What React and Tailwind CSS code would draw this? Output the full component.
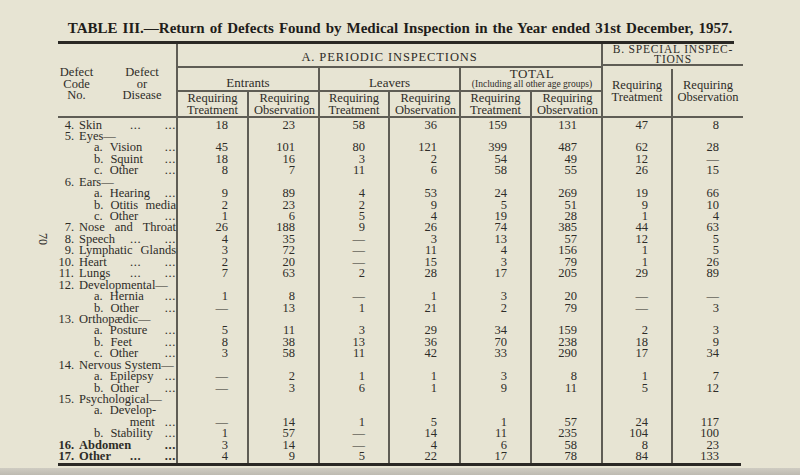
import React from 'react'

const rows = [
  { n: '4.', t: 'Skin', dots: 2, v: [18, 23, 58, 36, 159, 131, 47, 8] },
  { n: '5.', t: 'Eyes—' },
  { s: 'a.', t: 'Vision', dots: 1, v: [45, 101, 80, 121, 399, 487, 62, 28] },
  { s: 'b.', t: 'Squint', dots: 1, v: [18, 16, 3, 2, 54, 49, 12, '—'] },
  { s: 'c.', t: 'Other', dots: 1, v: [8, 7, 11, 6, 58, 55, 26, 15] },
  { n: '6.', t: 'Ears—' },
  { s: 'a.', t: 'Hearing', dots: 1, v: [9, 89, 4, 53, 24, 269, 19, 66] },
  { s: 'b.', t: 'Otitis media', just: true, v: [2, 23, 2, 9, 5, 51, 9, 10] },
  { s: 'c.', t: 'Other', dots: 1, v: [1, 6, 5, 4, 19, 28, 1, 4] },
  { n: '7.', t: 'Nose and Throat', just: true, v: [26, 188, 9, 26, 74, 385, 44, 63] },
  { n: '8.', t: 'Speech', dots: 2, v: [4, 35, '—', 3, 13, 57, 12, 5] },
  { n: '9.', t: 'Lymphatic Glands', just: true, v: [3, 72, '—', 11, 4, 156, 1, 5] },
  { n: '10.', t: 'Heart', dots: 2, v: [2, 20, '—', 15, 3, 79, 1, 26] },
  { n: '11.', t: 'Lungs', dots: 2, v: [7, 63, 2, 28, 17, 205, 29, 89] },
  { n: '12.', t: 'Developmental—' },
  { s: 'a.', t: 'Hernia', dots: 1, v: [1, 8, '—', 1, 3, 20, '—', '—'] },
  { s: 'b.', t: 'Other', dots: 1, v: ['—', 13, 1, 21, 2, 79, '—', 3] },
  { n: '13.', t: 'Orthopædic—' },
  { s: 'a.', t: 'Posture', dots: 1, v: [5, 11, 3, 29, 34, 159, 2, 3] },
  { s: 'b.', t: 'Feet', dots: 1, v: [8, 38, 13, 36, 70, 238, 18, 9] },
  { s: 'c.', t: 'Other', dots: 1, v: [3, 58, 11, 42, 33, 290, 17, 34] },
  { n: '14.', t: 'Nervous System—' },
  { s: 'a.', t: 'Epilepsy', dots: 1, v: ['—', 2, 1, 1, 3, 8, 1, 7] },
  { s: 'b.', t: 'Other', dots: 1, v: ['—', 3, 6, 1, 9, 11, 5, 12] },
  { n: '15.', t: 'Psychological—' },
  { s: 'a.', t: 'Develop-' },
  { cont: 'ment', v: ['—', 14, 1, 5, 1, 57, 24, 117] },
  { s: 'b.', t: 'Stability', dots: 1, v: [1, 57, '—', 14, 11, 235, 104, 100] },
  { n: '16.', t: 'Abdomen', dots: 1, bold: true, v: [3, 14, '—', 4, 6, 58, 8, 23] },
  { n: '17.', t: 'Other', dots: 2, bold: true, v: [4, 9, 5, 22, 17, 78, 84, 133] },
]

const pads = ['pr-[19px]', 'pr-[23px]', 'pr-[23px]', 'pr-[22px]', 'pr-[23px]', 'pr-[24px]', 'pr-[23px]', 'pr-[24px]']

function Dots({ className = '' }) {
  return <span className={`tracking-[0.6px] ${className}`}>...</span>
}

function Words({ text }) {
  return (
    <span className="flex-1 flex justify-between">
      {text.split(' ').map((w, i) => <span key={i}>{w}</span>)}
    </span>
  )
}

function Label({ r }) {
  const row = `h-[11.45px] leading-[11.45px] flex whitespace-nowrap ${r.bold ? 'font-bold' : ''}`
  if (r.cont) {
    return (
      <div className={row}>
        <span className="ml-auto">{r.cont}</span>
        <Dots className="ml-[10px]" />
      </div>
    )
  }
  const head = r.n ? (
    <>
      <span className="w-[16px] text-right">{r.n}</span>
      {r.just ? null : <span className="ml-[5px]">{r.t}</span>}
    </>
  ) : (
    <>
      <span className="ml-[36px]">{r.s}</span>
      {r.just ? null : <span className="ml-[7px]">{r.t}</span>}
    </>
  )
  if (r.just) {
    return (
      <div className={row}>
        {head}
        <span className={`flex-1 flex ${r.n ? 'ml-[5px]' : 'ml-[7px]'}`}><Words text={r.t} /></span>
      </div>
    )
  }
  if (r.dots === 2) {
    return (
      <div className={row}>
        <span className="w-[72px] flex shrink-0">{head}</span>
        <Dots />
        <Dots className="ml-auto" />
      </div>
    )
  }
  return (
    <div className={row}>
      {head}
      {r.dots === 1 ? <Dots className="ml-auto" /> : null}
    </div>
  )
}

function SubHead({ a, b, border }) {
  return (
    <div className={`text-center pt-[1px] text-[12.5px] leading-[11.5px] ${border ? 'border-r-2 border-[#5f5d55]' : ''}`}>
      {a}<br />{b}
    </div>
  )
}

function Group({ title, children, cols }) {
  return (
    <div className="border-r-2 border-[#5f5d55] flex flex-col">
      <div className="h-[24px] border-b-2 border-[#5f5d55] flex flex-col items-center justify-end">{title}</div>
      <div className={`flex-1 grid ${cols}`}>{children}</div>
    </div>
  )
}

export default function App() {
  return (
    <div className="relative w-[800px] h-[475px] overflow-hidden bg-[#e7e4d3] text-[#2e2c28] flex flex-col" style={{ fontFamily: '"Liberation Serif", "Times New Roman", serif' }}>
      <div className="absolute left-[37px] top-[233px] rotate-90 text-[12px] leading-[12px]">70</div>

      <h1 className="pt-[19px] text-center text-[15px] leading-[18px] font-bold text-[#1f1d1a] [word-spacing:1.3px]">
        TABLE III.—Return of Defects Found by Medical Inspection in the Year ended 31st December, 1957.
      </h1>
      <div className="ml-[58px] mt-[4px] w-[676px] h-[3px] bg-[#2a2824]" />

      <div className="ml-[58px] w-[685px] text-[12.5px]">
        <div className="grid grid-cols-[120px_425px_140px] h-[74px] border-b-2 border-[#5f5d55]">
          <div className="border-r-2 border-[#5f5d55] flex pt-[23px] leading-[11.5px]">
            <div className="w-[37px] text-center">Defect<br />Code<br />No.</div>
            <div className="flex-1 text-center pl-[13px]">Defect<br />or<br />Disease</div>
          </div>

          <div className="border-r-2 border-[#5f5d55] flex flex-col">
            <div className="h-[24px] border-b-2 border-[#5f5d55] text-center pt-[6px] text-[12.5px] leading-[14px] tracking-[0.07em]">
              A. PERIODIC INSPECTIONS
            </div>
            <div className="flex-1 grid grid-cols-[142px_141px_142px]">
              <Group title={<span className="leading-[13px] pb-[1px] text-[13px]">Entrants</span>} cols="grid-cols-[71px_71px]">
                <SubHead a="Requiring" b="Treatment" border />
                <SubHead a="Requiring" b="Observation" />
              </Group>
              <Group title={<span className="leading-[13px] pb-[1px] text-[13px]">Leavers</span>} cols="grid-cols-[70px_71px]">
                <SubHead a="Requiring" b="Treatment" border />
                <SubHead a="Requiring" b="Observation" />
              </Group>
              <div className="flex flex-col">
                <div className="h-[24px] border-b-2 border-[#5f5d55] flex flex-col items-center">
                  <span className="leading-[11px] text-[13px] tracking-[0.05em]">TOTAL</span>
                  <span className="text-[9.5px] leading-[11px] whitespace-nowrap">(Including all other age groups)</span>
                </div>
                <div className="flex-1 grid grid-cols-[71px_71px]">
                  <SubHead a="Requiring" b="Treatment" border />
                  <SubHead a="Requiring" b="Observation" />
                </div>
              </div>
            </div>
          </div>

          <div className="flex flex-col">
            <div className="h-[22px] border-b-2 border-[#5f5d55] text-center text-[11.5px] leading-[9.5px] tracking-[0.07em] pt-[1px]">
              B. SPECIAL INSPEC-<br />TIONS
            </div>
            <div className="flex-1 mt-[3px] grid grid-cols-[70px_70px]">
              <div className="border-r-2 border-[#5f5d55] text-center pt-[10px] leading-[12px]">Requiring<br />Treatment</div>
              <div className="text-center pt-[10px] leading-[12px]">Requiring<br />Observation</div>
            </div>
          </div>
        </div>

        <div className="grid grid-cols-[120px_71px_71px_70px_71px_71px_71px_70px_70px]">
          <div className="border-r-2 border-[#5f5d55] pt-[1.5px] flex flex-col">
            {rows.map((r, i) => <Label key={i} r={r} />)}
          </div>
          {pads.map((p, c) => (
            <div key={c} className={`${p} pt-[1.5px] flex flex-col items-end text-[12.5px] ${c < 7 ? 'border-r-2 border-[#5f5d55]' : ''}`}>
              {rows.map((r, i) => (
                <div key={i} className="h-[11.45px] leading-[11.45px]">{r.v ? r.v[c] : ''}</div>
              ))}
            </div>
          ))}
        </div>
        <div className="w-[683px] h-[3px] bg-[#2a2824]" />
      </div>

      <div className="mt-auto h-[7px] bg-gradient-to-b from-[#cfccc2] to-[#bdbab1]" />
    </div>
  )
}
